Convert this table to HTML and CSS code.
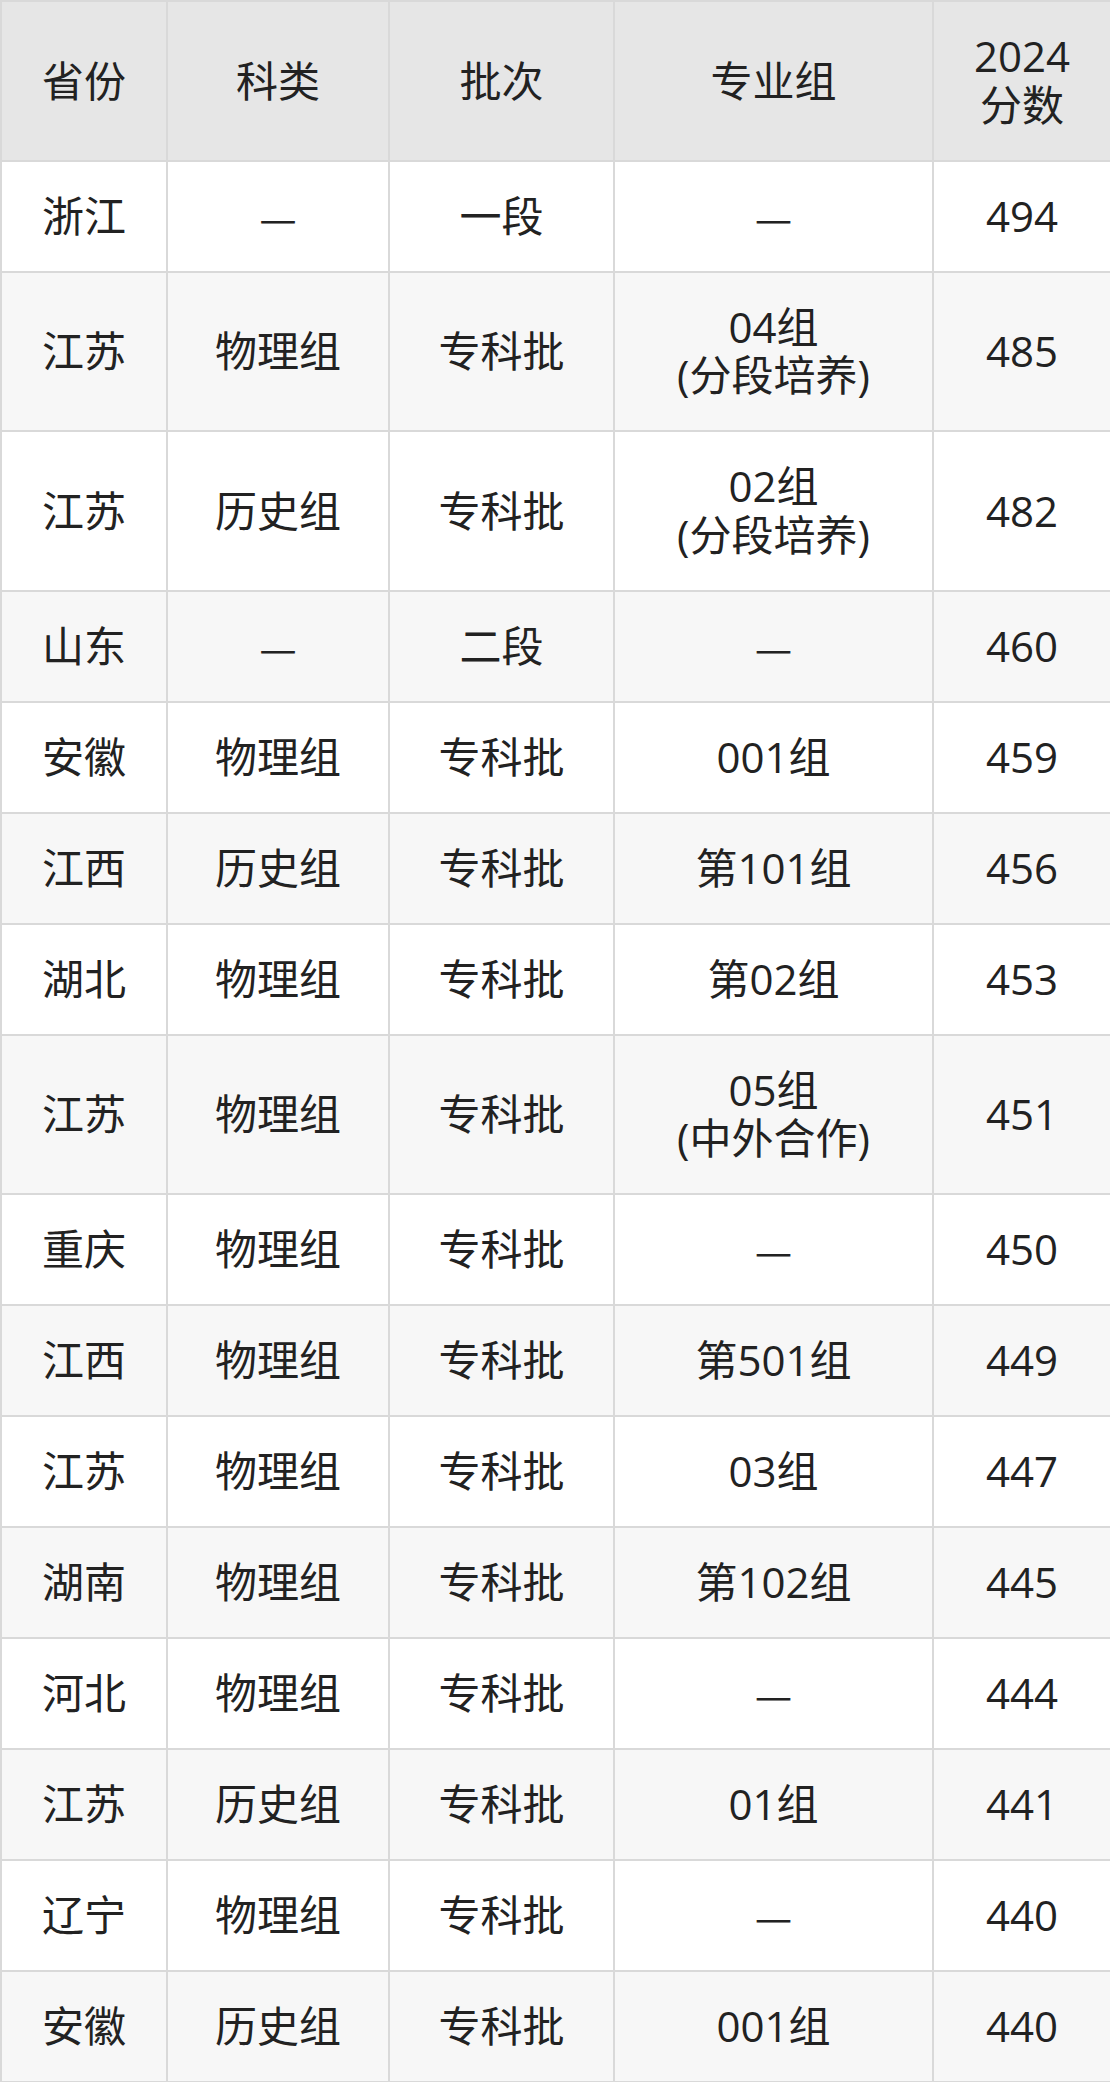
FILE: index.html
```html
<!DOCTYPE html>
<html lang="zh-CN">
<head>
<meta charset="utf-8">
<title>2024分数</title>
<link rel="stylesheet" href="styles.css">
</head>
<body>
<table class="score-table">
  <colgroup>
    <col class="c-prov">
    <col class="c-type">
    <col class="c-batch">
    <col class="c-group">
    <col class="c-score">
  </colgroup>
  <thead>
    <tr><th>省份</th><th>科类</th><th>批次</th><th>专业组</th><th>2024<br>分数</th></tr>
  </thead>
  <tbody>
    <tr><td>浙江</td><td class="dash">—</td><td>一段</td><td class="dash">—</td><td>494</td></tr>
    <tr><td>江苏</td><td>物理组</td><td>专科批</td><td>04组<br>(分段培养)</td><td>485</td></tr>
    <tr><td>江苏</td><td>历史组</td><td>专科批</td><td>02组<br>(分段培养)</td><td>482</td></tr>
    <tr><td>山东</td><td class="dash">—</td><td>二段</td><td class="dash">—</td><td>460</td></tr>
    <tr><td>安徽</td><td>物理组</td><td>专科批</td><td>001组</td><td>459</td></tr>
    <tr><td>江西</td><td>历史组</td><td>专科批</td><td>第101组</td><td>456</td></tr>
    <tr><td>湖北</td><td>物理组</td><td>专科批</td><td>第02组</td><td>453</td></tr>
    <tr><td>江苏</td><td>物理组</td><td>专科批</td><td>05组<br>(中外合作)</td><td>451</td></tr>
    <tr><td>重庆</td><td>物理组</td><td>专科批</td><td class="dash">—</td><td>450</td></tr>
    <tr><td>江西</td><td>物理组</td><td>专科批</td><td>第501组</td><td>449</td></tr>
    <tr><td>江苏</td><td>物理组</td><td>专科批</td><td>03组</td><td>447</td></tr>
    <tr><td>湖南</td><td>物理组</td><td>专科批</td><td>第102组</td><td>445</td></tr>
    <tr><td>河北</td><td>物理组</td><td>专科批</td><td class="dash">—</td><td>444</td></tr>
    <tr><td>江苏</td><td>历史组</td><td>专科批</td><td>01组</td><td>441</td></tr>
    <tr><td>辽宁</td><td>物理组</td><td>专科批</td><td class="dash">—</td><td>440</td></tr>
    <tr><td>安徽</td><td>历史组</td><td>专科批</td><td>001组</td><td>440</td></tr>
  </tbody>
</table>
</body>
</html>
```
FILE: styles.css
```css
html, body {
  margin: 0;
  padding: 0;
  background: #ffffff;
}
.score-table {
  width: 1110px;
  border-collapse: collapse;
  table-layout: fixed;
  font-family: "Open Sans", "Noto Sans CJK SC", sans-serif;
  font-size: 42px;
  line-height: 48.5px;
  color: #222222;
}
.c-prov { width: 166px; }
.c-type { width: 222px; }
.c-batch { width: 225px; }
.c-group { width: 319px; }
.c-score { width: 178px; }
.score-table th,
.score-table td {
  border: 2px solid #d9d9d9;
  padding: 30.25px 0;
  text-align: center;
  vertical-align: middle;
  font-weight: normal;
}
.score-table th {
  background: #e6e6e6;
}
.score-table tbody tr:nth-child(even) td {
  background: #f7f7f7;
}
.score-table .dash {
  font-family: "Noto Sans CJK SC", sans-serif;
}
```
